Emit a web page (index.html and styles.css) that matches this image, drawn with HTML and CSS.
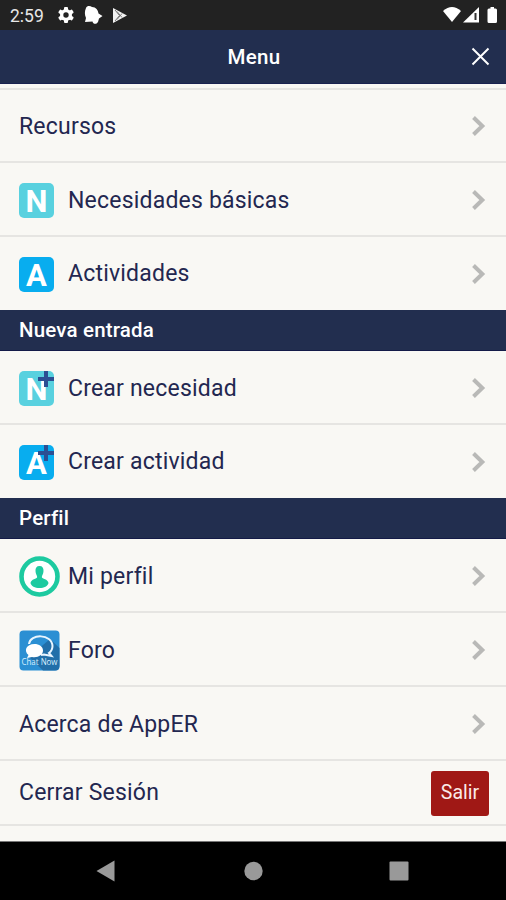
FILE: index.html
```html
<!DOCTYPE html>
<html lang="es">

<head>
    <meta charset="utf-8">
    <title>Menu</title>
    <link rel="stylesheet" href="styles.css">
</head>

<body>
    <!-- Shared shapes -->
    <svg class="defs" width="0" height="0">
        <symbol id="chevron" viewBox="0 0 14 22">
            <path d="M1.500 2.500 L10.300 11 L1.500 19.500" fill="none" stroke="#b9b9b7" stroke-width="4" />
        </symbol>
        <symbol id="plus" viewBox="0 0 16 16">
            <path d="M8 0V16M0 8H16" fill="none" stroke="#2c4f93" stroke-width="4" />
        </symbol>
    </svg>

    <!-- Status bar -->
    <div class="status-bar">
        <span class="time">2:59</span>
        <svg class="status-left" width="66" height="22" viewBox="0 0 66 22">
            <g transform="translate(8 11)">
                <g fill="#fff">
                    <circle r="6" />
                    <rect x="-2" y="-8" width="4" height="16" rx="1" />
                    <rect x="-2" y="-8" width="4" height="16" rx="1" transform="rotate(60)" />
                    <rect x="-2" y="-8" width="4" height="16" rx="1" transform="rotate(120)" />
                </g>
                <circle r="2.7" fill="#222" />
            </g>
            <path d="M28 4 C29 1.500 32 1.500 34 3 C38 3 40 6 40.500 9.500 L44.500 12 L41 14.500 L40 18 C38 21 35 20 34.500 17.500 L27 18 L28 14 C26.500 11 26.500 7 28 4 Z" fill="#fff" />
            <path d="M55 4 L69 11.500 L55 19 Z" fill="#f2f2f2" />
            <path d="M57 6 L61.500 11.500 L57 17 M59 7.500 L64 13.500 M59 15.500 L64 9.500" fill="none" stroke="#777" stroke-width="1" />
        </svg>
        <svg class="status-right" width="56" height="20" viewBox="0 0 56 20">
            <path d="M1 6 Q10 -2 19 6 L10 17 Z" fill="#fff" />
            <path d="M21 17.500 L37 2 V17.500 Z" fill="#fff" />
            <path d="M33.500 8 V15" stroke="#333" stroke-width="2" />
            <path d="M45.500 5 q0-1.500 1.500-1.500 h1.500 v-1.500 h3.500 v1.500 h1.500 q1.500 0 1.500 1.500 v11.500 q0 1.500-1.500 1.500 h-6.500 q-1.500 0-1.500-1.500 z" fill="#fff" />
        </svg>
    </div>

    <!-- Title bar -->
    <header class="header">
        <h1>Menu</h1>
        <svg class="close" width="19" height="19" viewBox="0 0 19 19">
            <path d="M1.500 1.500 L17.500 17.500 M17.500 1.500 L1.500 17.500" stroke="#fff" stroke-width="2" />
        </svg>
    </header>

    <!-- Menu list -->
    <main class="menu">
        <div class="item first">
            <span class="label">Recursos</span>
            <svg class="chevron"><use href="#chevron" /></svg>
        </div>
        <div class="item">
            <span class="icon"><span class="tile need">N</span></span>
            <span class="label">Necesidades básicas</span>
            <svg class="chevron"><use href="#chevron" /></svg>
        </div>
        <div class="item last">
            <span class="icon"><span class="tile activity">A</span></span>
            <span class="label">Actividades</span>
            <svg class="chevron"><use href="#chevron" /></svg>
        </div>

        <h2 class="divider">Nueva entrada</h2>
        <div class="item">
            <span class="icon"><span class="tile need">N<svg class="plus"><use href="#plus" /></svg></span></span>
            <span class="label">Crear necesidad</span>
            <svg class="chevron"><use href="#chevron" /></svg>
        </div>
        <div class="item last">
            <span class="icon"><span class="tile activity">A<svg class="plus"><use href="#plus" /></svg></span></span>
            <span class="label">Crear actividad</span>
            <svg class="chevron"><use href="#chevron" /></svg>
        </div>

        <h2 class="divider">Perfil</h2>
        <div class="item">
            <span class="icon">
                <svg width="41" height="41" viewBox="0 0 41 41">
                    <circle cx="20.500" cy="20.500" r="18" fill="#fff" stroke="#1dcaa0" stroke-width="4.600" />
                    <path d="M20.500 10 C23.500 10 24.700 12 24.500 15 C24.400 18 23 19.500 22.800 21 C23 23 29 23 29.500 27 C29 30 25 32 20.500 32 C16 32 12 30 11.500 27 C12 23 18 23 18.200 21 C18 19.500 16.600 18 16.500 15 C16.300 12 17.500 10 20.500 10 Z" fill="#1dcaa0" />
                </svg>
            </span>
            <span class="label">Mi perfil</span>
            <svg class="chevron"><use href="#chevron" /></svg>
        </div>
        <div class="item">
            <span class="icon">
                <svg width="41" height="41" viewBox="0 0 41 41">
                    <rect x=".5" y=".5" width="40" height="40" rx="4" fill="#2b8fd3" />
                    <path d="M31 9 L40.500 18 V36 Q40 40.500 36 40.500 H24 L10 27 Z" fill="#226fa9" />
                    <path d="M10 14 C11 3.500 33 3.500 33.500 16 C33.500 19 32 21.500 30 23 L32.500 26 L25 24.500 L22 25" fill="none" stroke="#e8f5ff" stroke-width="2" />
                    <path d="M15.500 14 C20 14 24 16.500 24 20.500 C24 25 19 28 13 27 L8 28 L9.500 25 C4.500 21 7 14 15.500 14 Z" fill="#fff" />
                    <text class="chat-text" x="2.500" y="35" textLength="36" lengthAdjust="spacingAndGlyphs">Chat Now</text>
                </svg>
            </span>
            <span class="label">Foro</span>
            <svg class="chevron"><use href="#chevron" /></svg>
        </div>
        <div class="item">
            <span class="label">Acerca de AppER</span>
            <svg class="chevron"><use href="#chevron" /></svg>
        </div>
        <div class="item logout">
            <span class="label">Cerrar Sesión</span>
            <button type="button" class="button">Salir</button>
        </div>
    </main>

    <!-- Android navigation -->
    <nav class="nav-bar">
        <svg width="20" height="22" viewBox="0 0 20 22"><path d="M.5 11 L18.500 .5 V21.500 Z" fill="#999" /></svg>
        <svg width="20" height="20" viewBox="0 0 20 20"><circle cx="10.500" cy="10" r="9.200" fill="#999" /></svg>
        <svg width="20" height="20" viewBox="0 0 20 20"><rect x=".5" y=".5" width="19" height="19" rx="1" fill="#999" /></svg>
    </nav>
</body>

</html>
```
FILE: styles.css
```css
* {
    box-sizing: border-box;
}

body {
    margin: 0;
    width: 506px;
    height: 900px;
    display: flex;
    flex-direction: column;
    overflow: hidden;
    font-family: Roboto, sans-serif;
    background-color: #f9f8f4;
    color: #232750;
}

svg {
    display: block;
    flex: none;
}

.defs {
    display: none;
}

/* Status bar */
.status-bar {
    flex: none;
    height: 30px;
    display: flex;
    align-items: center;
    padding: 0 8px 0 10px;
    background-color: #222;
    color: #e8e8e8;
}

.time {
    width: 48px;
    font-size: 17.5px;
    line-height: 30px;
    padding-top: 2px;
}

.status-left {
    overflow: visible;
}

.status-right {
    margin-left: auto;
}

/* Title bar */
.header {
    flex: none;
    height: 54px;
    display: grid;
    grid-template-columns: 1fr auto 1fr;
    align-items: center;
    padding: 0 16px 0 18px;
    background-color: #222e4f;
    border-bottom: 1px solid #1a2250;
    color: #fff;
}

h1 {
    grid-column: 2;
    margin: 0;
    font-size: 20.5px;
    font-weight: 500;
    letter-spacing: 0.3px;
}

.close {
    justify-self: end;
}

/* Menu list */
.menu {
    flex: 1;
    padding-top: 4px;
}

.item {
    height: 74px;
    display: flex;
    align-items: center;
    padding: 2px 20px 0 19px;
    border-bottom: 2px solid #e6e5e2;
}

.first {
    height: 75px;
    padding-top: 1px;
    border-top: 2px solid #e6e5e2;
}

.last {
    height: 73px;
    padding-top: 1px;
    border-bottom: none;
}

.label {
    padding-top: 1px;
    font-size: 23px;
    line-height: 30px;
    letter-spacing: 0.2px;
}

.last .label,
.logout .label {
    padding-top: 0;
}

.icon {
    width: 49px;
    flex: none;
}

.chevron {
    width: 14px;
    height: 22px;
    margin-left: auto;
}

.tile {
    position: relative;
    display: block;
    width: 35px;
    height: 35px;
    border-radius: 5px;
    color: #fff;
    font-size: 31px;
    font-weight: bold;
    line-height: 37px;
    text-align: center;
}

.need {
    background-color: #59d1df;
}

.activity {
    background-color: #08adef;
}

.plus {
    position: absolute;
    top: 0;
    right: 0;
    width: 16px;
    height: 16px;
}

.divider {
    height: 41px;
    margin: 0;
    padding-left: 19px;
    background-color: #222e4f;
    border-bottom: 1px solid #141b48;
    color: #fff;
    font-size: 20.5px;
    font-weight: 500;
    line-height: 41px;
    letter-spacing: 0.18px;
}

.chat-text {
    font-family: "Open Sans", sans-serif;
    font-size: 8.5px;
    fill: #d8efff;
}

.logout {
    height: 65px;
    padding-top: 1px;
    padding-right: 17px;
}

.button {
    width: 58px;
    height: 45px;
    margin-left: auto;
    padding: 0 0 2px;
    border: none;
    border-radius: 3px;
    background-color: #a01815;
    color: #fbeae8;
    font-family: Roboto, sans-serif;
    font-size: 19.5px;
}

/* Android navigation */
.nav-bar {
    flex: none;
    height: 59px;
    display: flex;
    align-items: center;
    justify-content: space-between;
    padding: 0 97px 0 96px;
    border-top: 1px solid #777;
    background-color: #000;
}
```
